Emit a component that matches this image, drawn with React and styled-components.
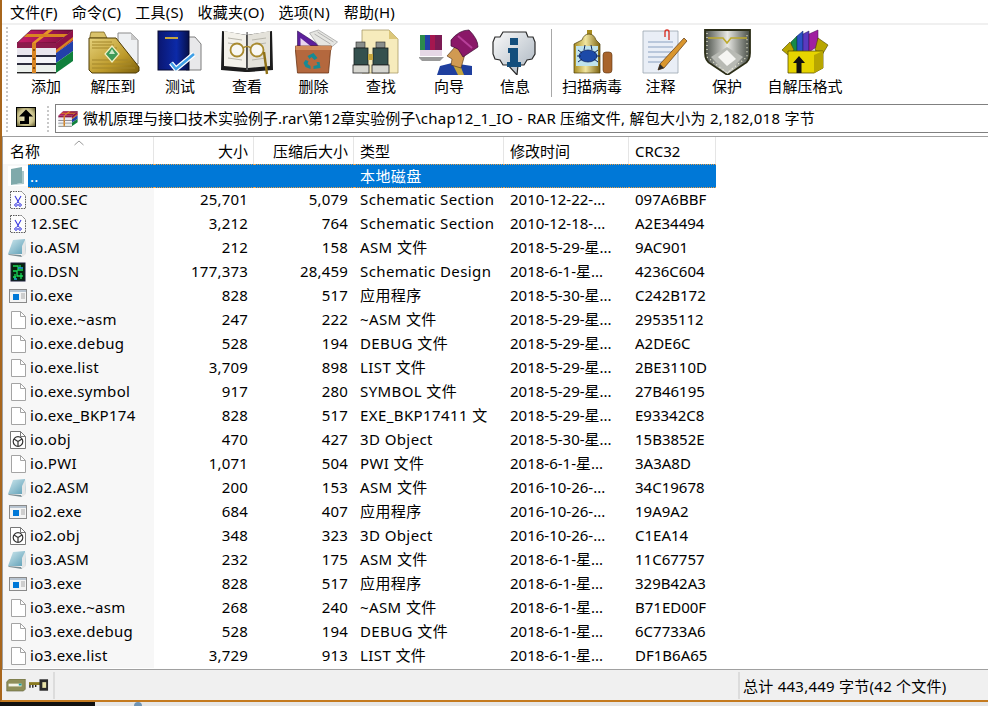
import React from 'react';
import styled, { createGlobalStyle } from 'styled-components';

const GlobalStyle = createGlobalStyle`
  html, body {
    margin: 0;
    padding: 0;
    background: #fff;
    overflow: hidden;
  }
  body {
    font-family: "Noto Sans", "Noto Sans CJK SC", sans-serif;
    font-size: 15px;
    color: #000;
  }
`;

const Window = styled.div`
  width: 988px;
  height: 702px;
  box-sizing: border-box;
  display: flex;
  flex-direction: column;
  border-left: 2px solid #a8661c;
  border-bottom: 2px solid #c47a1f;
  background: #fff;
`;

const MenuBar = styled.div`
  height: 23px;
  flex: none;
  display: flex;
  align-items: flex-end;
  gap: 14px;
  padding-left: 8px;
  border-bottom: 2px solid #f0f0f0;
`;

const MenuItem = styled.span`
  line-height: 22px;
  letter-spacing: 0.2px;
  white-space: nowrap;
`;

const ToolBar = styled.div`
  height: 79px;
  flex: none;
  display: flex;
  align-items: flex-start;
`;

const Grip = styled.div`
  width: 2px;
  height: ${p => p.$h}px;
  margin: ${p => p.$t}px ${p => p.$r}px 0 ${p => p.$l}px;
  flex: none;
  background: repeating-linear-gradient(to bottom, #c8c8c8 0 2px, #fff 2px 4px);
`;

const ToolButton = styled.div`
  width: ${p => p.$w}px;
  flex: none;
  display: flex;
  flex-direction: column;
  align-items: center;
  padding-top: 4px;
  svg { display: block; }
`;

const ToolLabel = styled.span`
  margin-top: 1px;
  line-height: 20px;
  white-space: nowrap;
`;

const ToolSep = styled.div`
  width: 1px;
  height: 68px;
  margin: 4px 6px 0 4px;
  flex: none;
  background: #a8a8a8;
`;

const AddressRow = styled.div`
  height: 29px;
  flex: none;
  display: flex;
  align-items: center;
`;

const UpButton = styled.div`
  width: 20px;
  height: 20px;
  margin-left: 8px;
  margin-top: -4px;
  flex: none;
  svg { display: block; }
`;

const AddressBox = styled.div`
  flex: 1;
  height: 29px;
  box-sizing: border-box;
  display: flex;
  align-items: center;
  padding-left: 2px;
  padding-bottom: 2px;
  border: 1px solid #808080;
  border-right: none;
  white-space: pre;
`;

const AddressIcon = styled.span`
  margin: 2px 5px 0 0;
  display: block;
  height: 16px;
  svg { display: block; }
`;

const WideText = styled.span`
  letter-spacing: ${p => p.$track}px;
`;

const ListFrame = styled.div`
  flex: 1;
  margin-top: 3px;
  border-top: 1px solid #a0a0a0;
  border-left: 1px solid #a0a0a0;
  border-bottom: 1px solid #a0a0a0;
  position: relative;
  overflow: hidden;
`;

const Columns = styled.div`
  width: 713px;
  display: grid;
  grid-template-columns: 151px 100px 100px 150px 125px 87px;
`;

const HeaderRow = styled(Columns)`
  height: 27px;
`;

const HeaderCell = styled.div`
  display: flex;
  align-items: center;
  justify-content: ${p => (p.$right ? 'flex-end' : 'flex-start')};
  padding: 0 ${p => (p.$right ? 5 : 0)}px 0 ${p => p.$pad || 0}px;
  border-right: 1px solid #e5e5e5;
  white-space: nowrap;
`;

const SortArrow = styled.svg`
  position: absolute;
  left: 70px;
  top: 3px;
`;

const Row = styled(Columns)`
  height: 24px;
  line-height: 22px;
`;

const NameCell = styled.div`
  display: flex;
  background: #f7f7f7;
  min-width: 0;
`;

const IconSlot = styled.div`
  width: 25px;
  flex: none;
  display: flex;
  align-items: center;
  padding-left: 5px;
  box-sizing: border-box;
  svg { display: block; }
`;

const selected = `
  background: #0078d7;
  color: #fff;
  border-top: 1px dotted #e8a04a;
  border-bottom: 1px dotted #e8a04a;
  line-height: 22px;
`;

const NameText = styled.div`
  flex: 1;
  padding-left: 2px;
  letter-spacing: 0.3px;
  white-space: nowrap;
  overflow: hidden;
  ${p => p.$sel && selected}
`;

const Cell = styled.div`
  padding: 0 ${p => (p.$right ? 6 : 0)}px 0 ${p => (p.$right ? 0 : 6)}px;
  text-align: ${p => (p.$right ? 'right' : 'left')};
  letter-spacing: ${p => p.$track || 0}px;
  white-space: nowrap;
  overflow: hidden;
  ${p => p.$sel && selected}
`;

const StatusBar = styled.div`
  height: 30px;
  flex: none;
  display: flex;
  align-items: center;
  background: #f0f0f0;
`;

const StatusCell = styled.div`
  height: 27px;
  display: flex;
  align-items: center;
  gap: ${p => p.$gap || 0}px;
  box-sizing: border-box;
  white-space: nowrap;
  letter-spacing: 0.25px;
  ${p => (p.$grow ? 'flex: 1;' : `width: ${p.$w}px;`)}
  ${p => p.$line && 'border-right: 2px solid #dcdcdc;'}
  padding-left: ${p => p.$pad || 0}px;
`;

const BottomStrip = styled.div`
  height: 4px;
  display: flex;
  background: #e6e6e6;
`;

const BlackPart = styled.div`
  width: 95px;
  background: #111;
`;

const TrayDot = styled.div`
  width: 8px;
  height: 4px;
  margin-left: 39px;
  border-radius: 4px 4px 0 0;
  background: #6f94b4;
`;

const toolViewBox = cx => `${cx - 30} 29 60 46`;

const RarShape = () => (
  <g>
    <defs>
      <linearGradient id="rarTop" x1="0" y1="0" x2="1" y2="0">
        <stop offset="0" stopColor="#c81d6a" />
        <stop offset="1" stopColor="#7c0f3e" />
      </linearGradient>
    </defs>
    <polygon points="17,43 31,30 73,30 56,43" fill="url(#rarTop)" stroke="#3a0a20" strokeWidth="0.6" />
    <polygon points="56,43 73,30 73,41 56,53" fill="#8f1247" />
    <polygon points="56,53 73,41 73,51 56,63" fill="#2340a8" />
    <polygon points="56,63 73,51 73,61 56,73" fill="#10803c" />
    <rect x="17" y="43" width="39" height="5" fill="#8c1a4c" />
    <rect x="17" y="48" width="39" height="7" fill="#e9e6ee" />
    <rect x="17" y="55" width="39" height="2" fill="#2c2c3c" />
    <rect x="17" y="57" width="39" height="6" fill="#f4f4f8" />
    <rect x="17" y="63" width="39" height="2" fill="#2c2c3c" />
    <rect x="17" y="65" width="39" height="7" fill="#ecf0ec" />
    <rect x="17" y="72" width="39" height="1.4" fill="#222" />
    <polygon points="32,43 36,43 53,30 48,30" fill="#e8962a" />
    <polygon points="24,37 27,34 68,34 64,37" fill="#d98522" />
    <rect x="32" y="43" width="4" height="30" fill="#d98522" />
    <polygon points="56,50 73,37 73,40 56,53" fill="#d98522" />
    <circle cx="34" cy="50" r="0.9" fill="#5a3000" />
    <circle cx="34" cy="59" r="0.9" fill="#5a3000" />
    <circle cx="34" cy="68" r="0.9" fill="#5a3000" />
  </g>
);

const IconAdd = () => (
  <svg width="60" height="46" viewBox={toolViewBox(46)}><RarShape /></svg>
);

const IconExtract = () => (
  <svg width="60" height="46" viewBox={toolViewBox(113)}>
    <defs>
      <linearGradient id="gold" x1="0" y1="0" x2="1" y2="1">
        <stop offset="0" stopColor="#e6d27c" />
        <stop offset="0.6" stopColor="#bd9a2a" />
        <stop offset="1" stopColor="#7c600c" />
      </linearGradient>
    </defs>
    <polygon points="118,33 131,33 138,40 138,64 118,64" fill="#eef0f2" stroke="#8b8b8b" />
    <polygon points="131,33 131,40 138,40" fill="#c9c9c9" />
    <polygon points="90,36 91,32 104,32 107,38 90,38" fill="#d9c26a" stroke="#6b5410" strokeWidth="0.7" />
    <polygon points="89,38 116,38 139,67 139,71 136,73 92,73 89,70" fill="url(#gold)" stroke="#4f3c06" strokeWidth="1" />
    <path d="M92 42h20M92 45h22M92 48h25M92 60h36M92 64h39M92 68h43" stroke="#a3862a" strokeWidth="1" />
    <polygon points="112,46 119,54 112,62 105,54" fill="#3f9a58" stroke="#f5efc0" strokeWidth="1.2" />
    <polygon points="112,49 115,54 112,54 109,54" fill="#c8e8c8" />
  </svg>
);

const IconTest = () => (
  <svg width="60" height="46" viewBox={toolViewBox(180)}>
    <defs>
      <linearGradient id="navy" x1="0" y1="0" x2="1" y2="0">
        <stop offset="0" stopColor="#0a1670" />
        <stop offset="0.6" stopColor="#0c2aa8" />
        <stop offset="1" stopColor="#061048" />
      </linearGradient>
    </defs>
    <polygon points="186,37 195,37 201,44 201,70 186,70" fill="#e8e8ea" stroke="#7d7d7d" />
    <rect x="158" y="31" width="31" height="39" fill="url(#navy)" stroke="#060a30" />
    <rect x="165" y="37" width="13" height="2" fill="#c4a53e" />
    <path d="M171 63l5 6 18-15" fill="none" stroke="#fff" strokeWidth="5" />
    <path d="M171 63l5 6 18-15" fill="none" stroke="#3f9fe6" strokeWidth="2.6" />
  </svg>
);

const IconView = () => (
  <svg width="60" height="46" viewBox={toolViewBox(247)}>
    <polygon points="222,31 247,35 272,31 273,70 249,72 245,72 221,70" fill="#1c1c1c" />
    <polygon points="224,31 246,35 246,68 224,66" fill="#f3f1ea" />
    <polygon points="248,35 270,31 270,66 248,68" fill="#e4e2da" />
    <path d="M228 38l14 2M228 43l14 2M252 40l14-2M252 45l14-2M228 58l14 2M252 60l14-2" stroke="#b8b6ac" strokeWidth="1" />
    <rect x="246.4" y="32" width="1.4" height="38" fill="#6b6b6b" />
    <circle cx="237" cy="50" r="6.5" fill="#f8f8f4" stroke="#a88a2e" strokeWidth="1.8" />
    <circle cx="257" cy="50" r="6.5" fill="#f8f8f4" stroke="#a88a2e" strokeWidth="1.8" />
    <path d="M243 48q4-3 8 0" fill="none" stroke="#a88a2e" strokeWidth="1.6" />
    <path d="M264 52l3 22" stroke="#8e7016" strokeWidth="2.4" />
  </svg>
);

const IconDelete = () => (
  <svg width="60" height="46" viewBox={toolViewBox(313.5)}>
    <polygon points="297,31 320,46 297,46" fill="#5c1f9c" stroke="#2c0c50" strokeWidth="0.6" />
    <polygon points="300,38 310,46 300,46" fill="#e8d6f0" />
    <polygon points="309,33 318,30 337,42 330,48 318,46" fill="#e6e6e2" stroke="#8f8f8f" strokeWidth="0.6" />
    <path d="M314 34l16 10M317 32l16 10" stroke="#a4a4a4" strokeWidth="0.8" />
    <path d="M295 46h36l-1 5-2 22h-31l-2-22z" fill="#b4683e" stroke="#6a3414" strokeWidth="0.8" />
    <rect x="295" y="46" width="36" height="4" fill="#d08a5a" />
    <path d="M307 56l6-3 4 5-3 2-3-3-2 2zM319 62l1 6-7 1v-3l4-1-1-3zM305 60l3 1-1 3 3 2v3l-5-2-2-4z" fill="#178a94" />
  </svg>
);

const IconFind = () => (
  <svg width="60" height="46" viewBox={toolViewBox(381)}>
    <polygon points="362,30 389,30 398,39 398,73 362,73" fill="#f6ebbc" stroke="#a89a68" strokeWidth="0.8" />
    <polygon points="389,30 389,39 398,39" fill="#dcc77a" />
    <rect x="356" y="42" width="9" height="6" fill="#8a8f8c" stroke="#222" strokeWidth="0.6" />
    <rect x="376" y="42" width="9" height="6" fill="#8a8f8c" stroke="#222" strokeWidth="0.6" />
    <rect x="354" y="48" width="14" height="17" fill="#34504e" stroke="#171f1f" strokeWidth="0.8" />
    <rect x="373" y="48" width="15" height="17" fill="#34504e" stroke="#171f1f" strokeWidth="0.8" />
    <rect x="368" y="54" width="5" height="6" fill="#c4a53e" />
    <rect x="353" y="65" width="16" height="8" fill="#d6d6d0" stroke="#222" strokeWidth="0.8" />
    <rect x="372" y="65" width="17" height="8" fill="#d6d6d0" stroke="#222" strokeWidth="0.8" />
  </svg>
);

const IconWizard = () => (
  <svg width="60" height="46" viewBox={toolViewBox(449)}>
    <rect x="420" y="35" width="5" height="15" fill="#2c8a4c" />
    <rect x="425" y="35" width="5" height="15" fill="#2340a8" />
    <rect x="430" y="35" width="5" height="15" fill="#a5174f" />
    <rect x="435" y="35" width="7" height="15" fill="#7c1a54" />
    <rect x="420" y="50" width="22" height="6" fill="#e6d8e6" />
    <path d="M418 57h26l-4 4h-18z" fill="#9a9a9a" />
    <path d="M437 75l3-9 12-3 20 3v9z" fill="#1f3f9e" />
    <path d="M452 63l8 2 4 10h-6z" fill="#c4a53e" />
    <path d="M455 47l-8 9 5 3-1 6 10 3 4-14z" fill="#d09a52" stroke="#4a2c0e" strokeWidth="0.6" />
    <path d="M451 40q8-10 18-10 9 9 9 17l-15 10-5-8-7-3z" fill="#8a1868" stroke="#3a0a30" strokeWidth="0.7" />
    <path d="M458 36l14 12" stroke="#b8409a" strokeWidth="2" />
  </svg>
);

const IconInfo = () => (
  <svg width="60" height="46" viewBox={toolViewBox(515)}>
    <defs>
      <linearGradient id="silver" x1="0" y1="0" x2="1" y2="1">
        <stop offset="0" stopColor="#fafafa" />
        <stop offset="1" stopColor="#a9b4bf" />
      </linearGradient>
    </defs>
    <path d="M503 32h23l2 5h5l2 5v12l-3 5-5 1-3 5h-6l-1 10-9-10h-5l-3-5-5-1-2-5V42l2-5h5z" fill="url(#silver)" stroke="#2a2a2a" strokeWidth="1.2" />
    <rect x="510" y="38" width="8" height="7" fill="#134e7c" />
    <path d="M508 48h10v14h3v5h-14v-5h3v-9h-2z" fill="#134e7c" />
  </svg>
);

const IconScan = () => (
  <svg width="60" height="46" viewBox={toolViewBox(592)}>
    <defs>
      <linearGradient id="can" x1="0" y1="0" x2="1" y2="0">
        <stop offset="0" stopColor="#a88c20" />
        <stop offset="0.45" stopColor="#f1e6a0" />
        <stop offset="1" stopColor="#7e6410" />
      </linearGradient>
    </defs>
    <rect x="603" y="52" width="9" height="21" rx="3" fill="#a8642c" stroke="#5a3410" strokeWidth="0.6" />
    <rect x="587" y="30" width="5" height="5" fill="#a88c20" />
    <path d="M582 40q2-6 7-6t7 6l4 4v29h-26v-29z" fill="url(#can)" stroke="#4a3c08" strokeWidth="0.7" />
    <rect x="576" y="46" width="22" height="20" fill="#bfe3ec" />
    <ellipse cx="588" cy="56" rx="9" ry="6" fill="#1c4aa8" stroke="#0b1e58" strokeWidth="0.7" />
    <path d="M578 50l4 3M577 56h4M578 62l4-3M598 50l-4 3M600 56h-4M598 62l-4-3M585 45l-1 5M591 45l1 5" stroke="#10265c" strokeWidth="1" />
  </svg>
);

const IconNote = () => (
  <svg width="60" height="46" viewBox={toolViewBox(661)}>
    <polygon points="643,31 678,31 678,73 643,73" fill="#e9eef6" stroke="#9aa4b0" strokeWidth="0.8" />
    <path d="M648 42h25M648 47h25M648 52h25M648 57h20M648 62h14" stroke="#8aa0c0" strokeWidth="1.2" />
    <path d="M665 37v-5q0-2 2-2t2 2v8" fill="none" stroke="#d8352a" strokeWidth="1.4" />
    <polygon points="684,38 687,41 664,68 658,70 660,64" fill="#d9962e" stroke="#5a3410" strokeWidth="0.7" />
    <polygon points="660,64 664,68 658,70" fill="#2a2a2a" />
  </svg>
);

const IconShield = () => (
  <svg width="60" height="46" viewBox={toolViewBox(727)}>
    <defs>
      <linearGradient id="steel" x1="0" y1="0" x2="1" y2="0">
        <stop offset="0" stopColor="#4a4f48" />
        <stop offset="0.5" stopColor="#e8e8e4" />
        <stop offset="1" stopColor="#444a42" />
      </linearGradient>
    </defs>
    <path d="M705 30h45v23q0 8-6 11l-16.500 11-16.500-11q-6-3-6-11z" fill="url(#steel)" stroke="#2c2e18" strokeWidth="1.8" />
    <path d="M708 38h15l4 5 4-5h16" fill="none" stroke="#bda92c" strokeWidth="1.6" />
    <path d="M727 47l-16 10 16 16 16-16z" fill="#b8bab4" />
    <path d="M727 50l-9 7 9 9 9-7z" fill="#f5f5f2" />
    <path d="M707 33v24l20 16 20-16V33" fill="none" stroke="#f4f4d8" strokeWidth="1.200" strokeDasharray="1 3" />
  </svg>
);

const IconSfx = () => (
  <svg width="60" height="46" viewBox={toolViewBox(805)}>
    <polygon points="791,42 797,36 797,52 791,52" fill="#168a48" stroke="#0a4020" strokeWidth="0.5" />
    <polygon points="797,36 803,31 803,52 797,52" fill="#2a52c4" stroke="#10245c" strokeWidth="0.5" />
    <polygon points="803,34 809,31 809,52 803,52" fill="#5a3ac0" stroke="#241650" strokeWidth="0.5" />
    <polygon points="809,34 818,30 818,46 809,52" fill="#a020a0" stroke="#40084a" strokeWidth="0.5" />
    <polygon points="782,50 790,42 794,50 788,55" fill="#b8a600" stroke="#4a4200" strokeWidth="0.6" />
    <polygon points="818,38 828,45 822,55 815,50" fill="#b8a600" stroke="#4a4200" strokeWidth="0.6" />
    <polygon points="788,51 823,51 823,68 814,73 788,73" fill="#e6d400" stroke="#5a5000" strokeWidth="0.8" />
    <polygon points="814,55 823,51 823,68 814,73" fill="#b8a600" />
    <path d="M799 56l-6 7h3.500v10h5v-10h3.500z" fill="#111" />
  </svg>
);

const UpIcon = () => (
  <svg width="20" height="20" viewBox="0 0 20 20">
    <defs>
      <radialGradient id="upBg" cx="0.5" cy="0.5" r="0.7">
        <stop offset="0" stopColor="#f4eecb" />
        <stop offset="0.6" stopColor="#c8c08a" />
        <stop offset="1" stopColor="#4e4a22" />
      </radialGradient>
    </defs>
    <rect x="0.500" y="0.500" width="19" height="19" fill="url(#upBg)" stroke="#000" />
    <path d="M10 2.500l7 7h-4v7.500H4v-3h4.500V9.500H3z" fill="#000" />
  </svg>
);

const SmallRar = () => (
  <svg width="20" height="16" viewBox="16 29 58 46" preserveAspectRatio="none"><RarShape /></svg>
);

const Folder = () => (
  <svg width="20" height="20" viewBox="0 0 20 20">
    <rect x="0" y="0" width="20" height="20" fill="#fff" />
    <polygon points="3,3 14,1 14,17 3,19" fill="#7fa9ab" />
    <polygon points="14,5 16,5 16,18 3,19 14,17" fill="#a9c6c8" />
  </svg>
);

const SecFile = () => (
  <svg width="20" height="20" viewBox="0 0 20 20">
    <path d="M2.500 1.500h11l4 4v13h-15z" fill="#fdfdfd" stroke="#555" strokeDasharray="1.500 1" />
    <path d="M7 6l4 7M13 6l-4 7" stroke="#3a3ae0" strokeWidth="1.100" />
    <circle cx="8" cy="15" r="1.300" fill="none" stroke="#3a3ae0" />
    <circle cx="12" cy="15" r="1.300" fill="none" stroke="#3a3ae0" />
  </svg>
);

const AsmFile = () => (
  <svg width="20" height="20" viewBox="0 0 20 20">
    <defs>
      <linearGradient id="pad" x1="0" y1="0" x2="1" y2="1">
        <stop offset="0" stopColor="#cfe8ee" />
        <stop offset="1" stopColor="#5a9cb4" />
      </linearGradient>
    </defs>
    <polygon points="5,2 17,1 18,16 0,16" fill="url(#pad)" />
    <polygon points="0,16 13,17 14,19 1,17" fill="#7a8c92" />
    <polygon points="14,19 18,16 17,2 14,8" fill="#e6e6e6" />
  </svg>
);

const DsnFile = () => (
  <svg width="20" height="20" viewBox="0 0 20 20">
    <rect x="3" y="1" width="14" height="18" fill="#06240e" stroke="#1a1a3a" />
    <path d="M5 4h5v4h5M5 9h4v5h6M7 12v5M12 3v3M13 11v6M5 15h3" fill="none" stroke="#19d65a" strokeWidth="1.300" />
    <path d="M10 6h5M6 17h3" stroke="#1fa0e0" strokeWidth="1.300" />
  </svg>
);

const ExeFile = () => (
  <svg width="20" height="20" viewBox="0 0 20 20">
    <rect x="1.500" y="3.500" width="17" height="13" fill="#f4f4f4" stroke="#8a8a8a" />
    <rect x="2" y="4" width="16" height="2" fill="#b8c4d0" />
    <rect x="5" y="8" width="6" height="6" fill="#0078d7" />
    <path d="M13 8h4M13 10h4M13 12h4" stroke="#a8a8a8" />
  </svg>
);

const BlankFile = () => (
  <svg width="20" height="20" viewBox="0 0 20 20">
    <path d="M3.500 1.500h9l5 5v12h-14z" fill="#fff" stroke="#a4a4a4" />
    <path d="M12.500 1.500v5h5" fill="none" stroke="#a4a4a4" />
  </svg>
);

const ObjFile = () => (
  <svg width="20" height="20" viewBox="0 0 20 20">
    <path d="M2.500 1.500h10l5 5v12h-15z" fill="#fff" stroke="#777" />
    <path d="M12.500 1.500v5h5" fill="none" stroke="#777" />
    <circle cx="10" cy="11.500" r="4.800" fill="none" stroke="#333" strokeWidth="1.200" />
    <path d="M10 11.500V16M10 11.500l-4-2.500M10 11.500l4-2.500" stroke="#333" strokeWidth="1.200" />
  </svg>
);

const fileIcons = {
  folder: Folder, sec: SecFile, asm: AsmFile, dsn: DsnFile, exe: ExeFile, blank: BlankFile, obj: ObjFile,
};

const DriveIcon = () => (
  <svg width="20" height="13" viewBox="0 0 20 14">
    <polygon points="0,3 3,0 20,0 20,11 18,13 0,13" fill="#8f8f5a" stroke="#5c5c34" strokeWidth="0.600" />
    <rect x="2" y="5" width="14" height="3" fill="#f4f4e8" />
    <rect x="13" y="5" width="3" height="2" fill="#1fa0a0" />
  </svg>
);

const KeyIcon = () => (
  <svg width="20" height="12" viewBox="0 0 21 12">
    <rect x="0" y="3" width="12" height="3" fill="#8a7a20" />
    <path d="M1 6v3M4 6v3M7 6v2" stroke="#222" strokeWidth="1.500" />
    <rect x="11" y="0" width="9" height="12" fill="#2a2a2a" />
    <rect x="14" y="3" width="4" height="6" fill="#e8e2a8" />
  </svg>
);

const menus = ['文件(F)', '命令(C)', '工具(S)', '收藏夹(O)', '选项(N)', '帮助(H)'];

const tools = [
  { label: '添加', w: 68, Icon: IconAdd },
  { label: '解压到', w: 66, Icon: IconExtract },
  { label: '测试', w: 68, Icon: IconTest },
  { label: '查看', w: 66, Icon: IconView },
  { label: '删除', w: 67, Icon: IconDelete },
  { label: '查找', w: 68, Icon: IconFind },
  { label: '向导', w: 68, Icon: IconWizard },
  { label: '信息', w: 64, Icon: IconInfo },
];

const tools2 = [
  { label: '扫描病毒', w: 68, Icon: IconScan },
  { label: '注释', w: 69, Icon: IconNote },
  { label: '保护', w: 64, Icon: IconShield },
  { label: '自解压格式', w: 92, Icon: IconSfx },
];

const files = [
  ['sec', '000.SEC', '25,701', '5,079', 'Schematic Section', '2010-12-22-...', '097A6BBF'],
  ['sec', '12.SEC', '3,212', '764', 'Schematic Section', '2010-12-18-...', 'A2E34494'],
  ['asm', 'io.ASM', '212', '158', 'ASM 文件', '2018-5-29-星...', '9AC901'],
  ['dsn', 'io.DSN', '177,373', '28,459', 'Schematic Design', '2018-6-1-星...', '4236C604'],
  ['exe', 'io.exe', '828', '517', '应用程序', '2018-5-30-星...', 'C242B172'],
  ['blank', 'io.exe.~asm', '247', '222', '~ASM 文件', '2018-5-29-星...', '29535112'],
  ['blank', 'io.exe.debug', '528', '194', 'DEBUG 文件', '2018-5-29-星...', 'A2DE6C'],
  ['blank', 'io.exe.list', '3,709', '898', 'LIST 文件', '2018-5-29-星...', '2BE3110D'],
  ['blank', 'io.exe.symbol', '917', '280', 'SYMBOL 文件', '2018-5-29-星...', '27B46195'],
  ['blank', 'io.exe_BKP174', '828', '517', 'EXE_BKP17411 文', '2018-5-29-星...', 'E93342C8'],
  ['obj', 'io.obj', '470', '427', '3D Object', '2018-5-30-星...', '15B3852E'],
  ['blank', 'io.PWI', '1,071', '504', 'PWI 文件', '2018-6-1-星...', '3A3A8D'],
  ['asm', 'io2.ASM', '200', '153', 'ASM 文件', '2016-10-26-...', '34C19678'],
  ['exe', 'io2.exe', '684', '407', '应用程序', '2016-10-26-...', '19A9A2'],
  ['obj', 'io2.obj', '348', '323', '3D Object', '2016-10-26-...', 'C1EA14'],
  ['asm', 'io3.ASM', '232', '175', 'ASM 文件', '2018-6-1-星...', '11C67757'],
  ['exe', 'io3.exe', '828', '517', '应用程序', '2018-6-1-星...', '329B42A3'],
  ['blank', 'io3.exe.~asm', '268', '240', '~ASM 文件', '2018-6-1-星...', 'B71ED00F'],
  ['blank', 'io3.exe.debug', '528', '194', 'DEBUG 文件', '2018-6-1-星...', '6C7733A6'],
  ['blank', 'io3.exe.list', '3,729', '913', 'LIST 文件', '2018-6-1-星...', 'DF1B6A65'],
];

const FileRow = ({ icon, name, size, packed, type, time, crc, sel }) => {
  const FileIcon = fileIcons[icon];
  return (
    <Row>
      <NameCell>
        <IconSlot><FileIcon /></IconSlot>
        <NameText $sel={sel}>{name}</NameText>
      </NameCell>
      <Cell $right $track={0.2} $sel={sel}>{size}</Cell>
      <Cell $right $track={0.2} $sel={sel}>{packed}</Cell>
      <Cell $track={0.4} $sel={sel}>{type}</Cell>
      <Cell $sel={sel}>{time}</Cell>
      <Cell $sel={sel}>{crc}</Cell>
    </Row>
  );
};

const App = () => {
  return (
    <>
      <GlobalStyle />
      <Window>
        <MenuBar>
          {menus.map(m => <MenuItem key={m}>{m}</MenuItem>)}
        </MenuBar>
        <ToolBar>
          <Grip $h={74} $t={2} $l={4} $r={4} />
          {tools.map(t => (
            <ToolButton key={t.label} $w={t.w}>
              <t.Icon />
              <ToolLabel>{t.label}</ToolLabel>
            </ToolButton>
          ))}
          <ToolSep />
          {tools2.map(t => (
            <ToolButton key={t.label} $w={t.w}>
              <t.Icon />
              <ToolLabel>{t.label}</ToolLabel>
            </ToolButton>
          ))}
        </ToolBar>
        <AddressRow>
          <Grip $h={26} $t={0} $l={4} $r={0} />
          <UpButton><UpIcon /></UpButton>
          <Grip $h={26} $t={0} $l={11} $r={6} />
          <AddressBox>
            <AddressIcon><SmallRar /></AddressIcon>
            微机原理与接口技术实验例子.rar\第12章实验例子\
            <WideText $track={0.25}>chap12_1_IO - RAR 压缩文件, 解包大小为 2,182,018 字节</WideText>
          </AddressBox>
        </AddressRow>
        <ListFrame>
          <SortArrow width="12" height="6" viewBox="0 0 12 6">
            <path d="M1.500 5L6 1l4.500 4" fill="none" stroke="#9a9a9a" />
          </SortArrow>
          <HeaderRow>
            <HeaderCell $pad={7}>名称</HeaderCell>
            <HeaderCell $right>大小</HeaderCell>
            <HeaderCell $right>压缩后大小</HeaderCell>
            <HeaderCell $pad={6}>类型</HeaderCell>
            <HeaderCell $pad={6}>修改时间</HeaderCell>
            <HeaderCell $pad={6}>CRC32</HeaderCell>
          </HeaderRow>
          <FileRow icon="folder" name=".." type="本地磁盘" sel />
          {files.map(f => (
            <FileRow key={f[1]} icon={f[0]} name={f[1]} size={f[2]} packed={f[3]} type={f[4]} time={f[5]} crc={f[6]} />
          ))}
        </ListFrame>
        <StatusBar>
          <StatusCell $w={53} $line $pad={4} $gap={3}>
            <DriveIcon />
            <KeyIcon />
          </StatusCell>
          <StatusCell $grow $line />
          <StatusCell $w={248} $pad={3}>总计 443,449 字节(42 个文件)</StatusCell>
        </StatusBar>
      </Window>
      <BottomStrip>
        <BlackPart />
        <TrayDot />
      </BottomStrip>
    </>
  );
};

export default App;
